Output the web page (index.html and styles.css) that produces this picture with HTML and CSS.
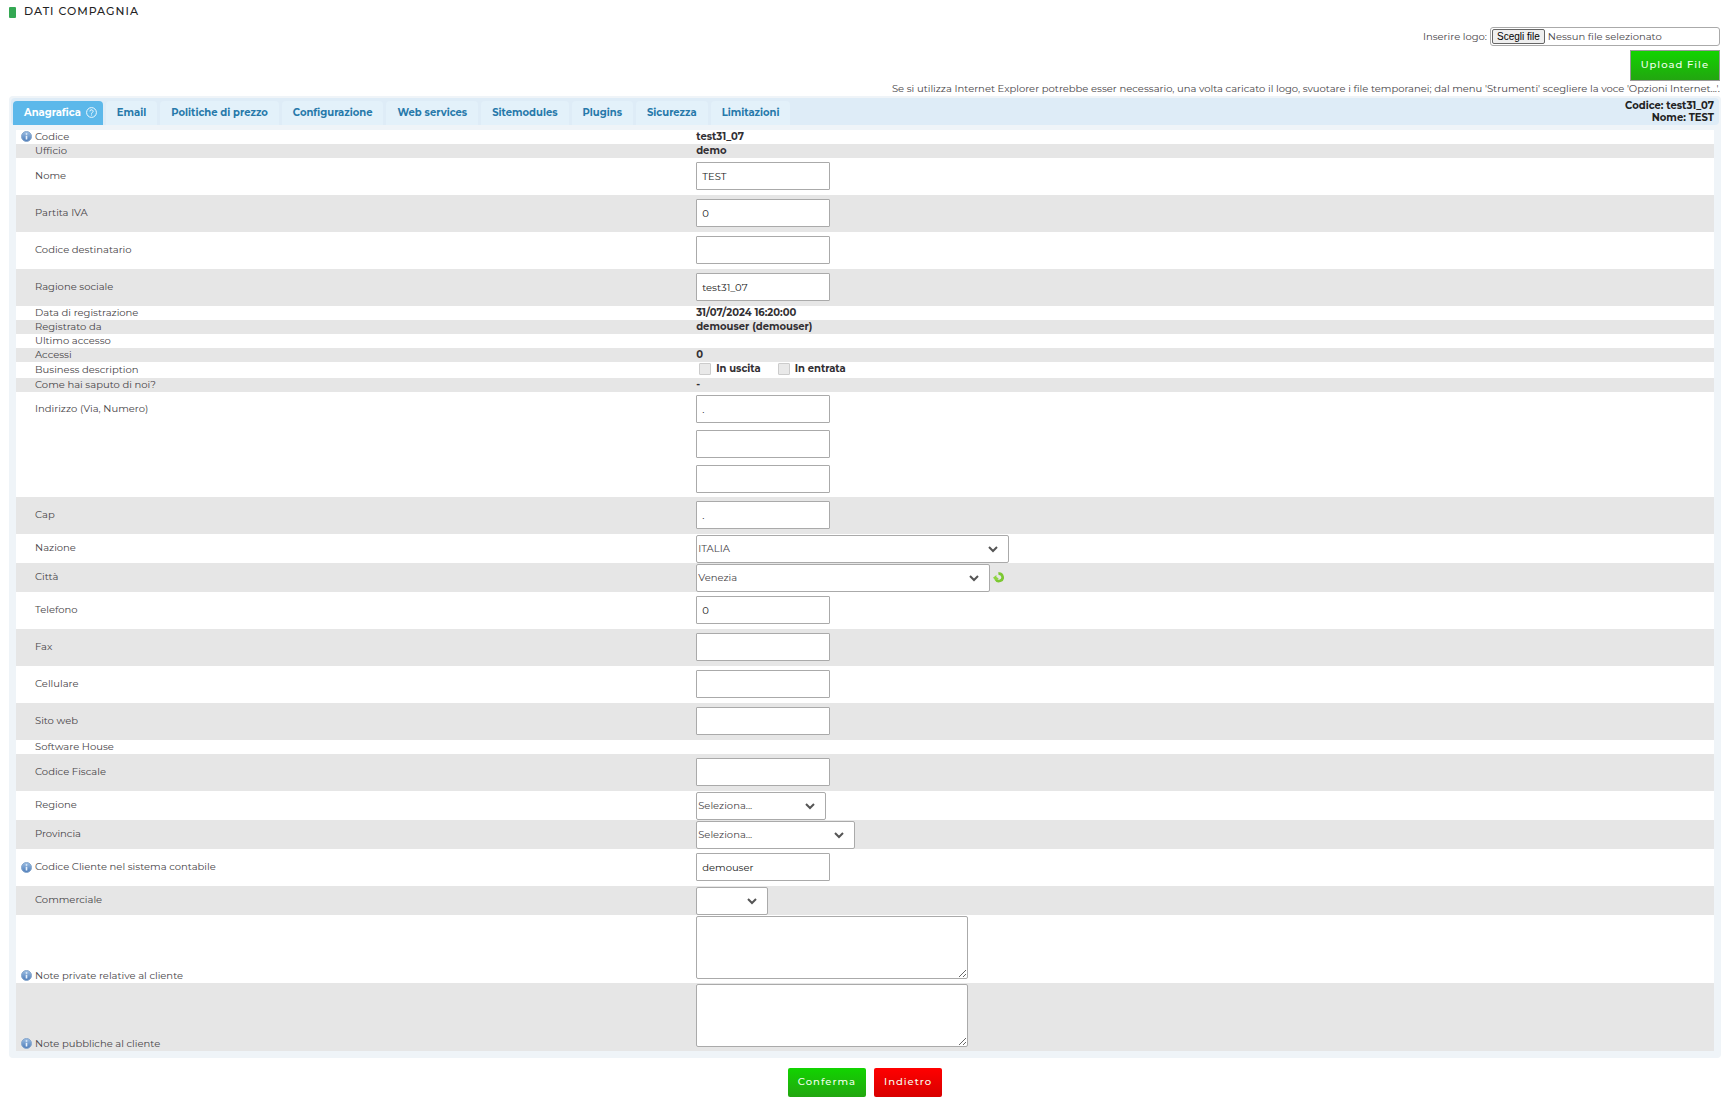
FILE: index.html
```html
<!DOCTYPE html>
<html lang="it">
<head>
  <meta charset="UTF-8">
  <meta name="viewport" content="width=device-width, initial-scale=1.0">
  <title>Dati compagnia</title>
  <link rel="stylesheet" href="styles.css">
</head>
<body>
  <h1 class="page-title">DATI COMPAGNIA</h1>

  <!-- Logo upload -->
  <form class="upload">
    <div class="upload-row">
      <label for="logo">Inserire logo:</label>
      <div class="file-box">
        <span class="file-btn">Scegli file</span>
        <span class="file-name">Nessun file selezionato</span>
        <input type="file" id="logo">
      </div>
    </div>
    <button type="button" class="btn btn-upload">Upload File</button>
    <p class="upload-note">Se si utilizza Internet Explorer potrebbe esser necessario, una volta caricato il logo, svuotare i file temporanei; dal menu 'Strumenti' scegliere la voce 'Opzioni Internet...'.</p>
  </form>

  <svg class="symbols" width="0" height="0" aria-hidden="true">
    <linearGradient id="info-fill" x1="0" y1="0" x2="0" y2="1">
      <stop offset="0" stop-color="#9dbfe4"/>
      <stop offset="1" stop-color="#4a7ab8"/>
    </linearGradient>
    <symbol id="info" viewBox="0 0 11 11">
      <circle cx="5.5" cy="5.5" r="5" fill="url(#info-fill)" stroke="#86a6cc"/>
      <path d="M5.5 2.2v1.6M5.5 4.8v3.7" stroke="#e8f1fb" stroke-width="1.6"/>
    </symbol>
  </svg>

  <form>
    <div class="panel">
      <!-- Tabs -->
      <div class="tabbar">
        <nav class="tabs">
          <a href="#" class="tab active">Anagrafica
            <svg class="help" viewBox="0 0 11 11" aria-hidden="true">
              <circle cx="5.5" cy="5.5" r="4.9" fill="none" stroke="#fff" stroke-width="0.9"/>
              <path d="M3.9 4.4a1.6 1.5 0 1 1 2.4 1.2c-.5.3-.8.5-.8 1.1M5.5 7.5v1" fill="none" stroke="#fff" stroke-width="0.9"/>
            </svg>
          </a>
          <a href="#" class="tab">Email</a>
          <a href="#" class="tab">Politiche di prezzo</a>
          <a href="#" class="tab">Configurazione</a>
          <a href="#" class="tab">Web services</a>
          <a href="#" class="tab">Sitemodules</a>
          <a href="#" class="tab">Plugins</a>
          <a href="#" class="tab">Sicurezza</a>
          <a href="#" class="tab">Limitazioni</a>
        </nav>
        <div class="company">
          <div>Codice: test31_07</div>
          <div>Nome: TEST</div>
        </div>
      </div>

      <!-- Anagrafica -->
      <table class="data">
        <colgroup>
          <col class="col-icon">
          <col>
          <col class="col-value">
        </colgroup>
        <tbody>
          <tr><td><svg class="info"><use href="#info"/></svg></td><th>Codice</th><td class="value">test31_07</td></tr>
          <tr><td></td><th>Ufficio</th><td class="value">demo</td></tr>
          <tr><td></td><th><label for="nome">Nome</label></th><td class="value"><input type="text" id="nome" value="TEST"></td></tr>
          <tr><td></td><th><label for="piva">Partita IVA</label></th><td class="value"><input type="text" id="piva" value="0"></td></tr>
          <tr><td></td><th><label for="coddest">Codice destinatario</label></th><td class="value"><input type="text" id="coddest"></td></tr>
          <tr><td></td><th><label for="ragione">Ragione sociale</label></th><td class="value"><input type="text" id="ragione" value="test31_07"></td></tr>
          <tr><td></td><th>Data di registrazione</th><td class="value">31/07/2024 16:20:00</td></tr>
          <tr><td></td><th>Registrato da</th><td class="value">demouser (demouser)</td></tr>
          <tr><td></td><th>Ultimo accesso</th><td class="value"></td></tr>
          <tr><td></td><th>Accessi</th><td class="value">0</td></tr>
          <tr>
            <td></td>
            <th>Business description</th>
            <td class="value">
              <div class="checks">
                <label><input type="checkbox" disabled>In uscita</label>
                <label><input type="checkbox" disabled>In entrata</label>
              </div>
            </td>
          </tr>
          <tr><td></td><th>Come hai saputo di noi?</th><td class="value">-</td></tr>
          <tr class="row-address">
            <td></td>
            <th><label for="indirizzo1">Indirizzo (Via, Numero)</label></th>
            <td class="value">
              <div class="address">
                <input type="text" id="indirizzo1" value=".">
                <input type="text" id="indirizzo2" aria-label="Indirizzo 2">
                <input type="text" id="indirizzo3" aria-label="Indirizzo 3">
              </div>
            </td>
          </tr>
          <tr><td></td><th><label for="cap">Cap</label></th><td class="value"><input type="text" id="cap" value="."></td></tr>
          <tr><td></td><th><label for="nazione">Nazione</label></th><td class="value"><select id="nazione" class="sel-nazione"><option>ITALIA</option></select></td></tr>
          <tr>
            <td></td>
            <th><label for="citta">Città</label></th>
            <td class="value">
              <div class="city">
                <select id="citta" class="sel-citta"><option>Venezia</option></select>
                <button type="button" class="refresh" aria-label="Aggiorna">
                  <svg viewBox="0 0 11 11" aria-hidden="true">
                    <path d="M5.4 1.7A3.7 3.7 0 1 1 2.6 7" fill="none" stroke="#7cc832" stroke-width="2.7"/>
                    <path d="M0 5.8L3.4 3v2l2.4 1.6-3 2z" fill="#8ed441"/>
                  </svg>
                </button>
              </div>
            </td>
          </tr>
          <tr><td></td><th><label for="telefono">Telefono</label></th><td class="value"><input type="text" id="telefono" value="0"></td></tr>
          <tr><td></td><th><label for="fax">Fax</label></th><td class="value"><input type="text" id="fax"></td></tr>
          <tr><td></td><th><label for="cellulare">Cellulare</label></th><td class="value"><input type="text" id="cellulare"></td></tr>
          <tr><td></td><th><label for="sito">Sito web</label></th><td class="value"><input type="text" id="sito"></td></tr>
          <tr><td></td><th>Software House</th><td class="value"></td></tr>
          <tr><td></td><th><label for="cf">Codice Fiscale</label></th><td class="value"><input type="text" id="cf"></td></tr>
          <tr><td></td><th><label for="regione">Regione</label></th><td class="value"><select id="regione" class="sel-regione"><option>Seleziona...</option></select></td></tr>
          <tr><td></td><th><label for="provincia">Provincia</label></th><td class="value"><select id="provincia" class="sel-provincia"><option>Seleziona...</option></select></td></tr>
          <tr><td><svg class="info"><use href="#info"/></svg></td><th><label for="contabile">Codice Cliente nel sistema contabile</label></th><td class="value"><input type="text" id="contabile" value="demouser"></td></tr>
          <tr><td></td><th><label for="commerciale">Commerciale</label></th><td class="value"><select id="commerciale" class="sel-commerciale"><option></option></select></td></tr>
          <tr class="row-notes"><td><svg class="info"><use href="#info"/></svg></td><th><label for="note1">Note private relative al cliente</label></th><td class="value"><textarea id="note1"></textarea></td></tr>
          <tr class="row-notes"><td><svg class="info"><use href="#info"/></svg></td><th><label for="note2">Note pubbliche al cliente</label></th><td class="value"><textarea id="note2"></textarea></td></tr>
        </tbody>
      </table>
    </div>

    <div class="actions">
      <button type="button" class="btn">Conferma</button>
      <button type="button" class="btn btn-red">Indietro</button>
    </div>
  </form>
</body>
</html>
```
FILE: styles.css
```css
* {
  box-sizing: border-box;
}
body {
  margin: 0;
  padding: 0 10px 0 9px;
  background: #fff;
  color: #484548;
  font-family: Montserrat, Inter, sans-serif;
  font-size: 10px;
  line-height: 14px;
}
.page-title {
  display: flex;
  align-items: center;
  gap: 8px;
  margin: 0;
  padding-top: 4px;
  color: #222;
  font-size: 11px;
  font-weight: 500;
  letter-spacing: 1px;
}
.page-title::before {
  content: "";
  width: 7px;
  height: 11px;
  margin-top: 2px;
  border-radius: 1px;
  background: #34a853;
}
.symbols {
  position: absolute;
}

/* Logo upload */
.upload {
  display: flex;
  flex-direction: column;
  align-items: flex-end;
  padding: 9px 1px 0 0;
}
.upload-row {
  display: flex;
  align-items: center;
  gap: 3px;
}
.file-box {
  position: relative;
  display: flex;
  align-items: center;
  gap: 3px;
  width: 230px;
  height: 19px;
  padding: 0 1px;
  border: 1px solid #aaa;
  border-radius: 3px;
}
.file-box input {
  position: absolute;
  inset: 0;
  width: 100%;
  opacity: 0;
}
.file-btn {
  padding: 0 4px;
  border: 1px solid #666;
  border-radius: 2px;
  background: #efefef;
  color: #000;
  font-family: "Liberation Sans", Arial, sans-serif;
  line-height: 13px;
}
.upload-note {
  margin: 0;
}
.btn {
  height: 29px;
  padding: 0 10px 2px;
  border: none;
  border-radius: 2px;
  background: linear-gradient(#12d400, #22a610);
  color: #f4fff0;
  font-family: inherit;
  font-size: 10px;
  font-weight: 500;
  letter-spacing: 1px;
  cursor: pointer;
}
.btn-upload {
  height: 31px;
  margin: 4px 0 1px;
  border: 1px solid #999;
  border-radius: 0;
}
.btn-red {
  background: linear-gradient(#ff0000, #d80000);
}

/* Panel and tabs */
.panel {
  padding: 2px 2px 7px;
  border-radius: 4px;
  background: #eff4f8;
}
.tabbar {
  display: flex;
  justify-content: space-between;
  height: 27px;
  padding: 3px 5px 0 2px;
  border-radius: 4px;
  background: #deecf7;
}
.tabs {
  display: flex;
  gap: 3px;
}
.tab {
  display: flex;
  align-items: center;
  gap: 5px;
  padding: 0 11px 1px;
  border-radius: 4px 4px 0 0;
  background: #e3f1fa;
  color: #2779aa;
  font-weight: 700;
  text-decoration: none;
}
.tab.active {
  padding-right: 6px;
  background: #5cb8ea;
  color: #fff;
}
.help {
  width: 11px;
  height: 11px;
}
.company {
  color: #222;
  font-weight: 700;
  line-height: 12px;
  text-align: right;
  margin-top: -1px;
}

/* Data table */
.data {
  width: calc(100% - 10px);
  margin: 5px 5px 0;
  border-collapse: collapse;
  table-layout: fixed;
  background: #fff;
}
.data tr:nth-child(even) {
  background: #e6e6e6;
}
.data td,
.data th {
  height: 14px;
  padding: 0;
  font-weight: 400;
  text-align: left;
  vertical-align: middle;
}
.data th label {
  display: block;
  padding-bottom: 2px;
}
.data .value {
  padding-left: 1px;
  color: #322f33;
  font-weight: 700;
}
.col-icon {
  width: 19px;
}
.col-value {
  width: 60%;
}
.info {
  display: block;
  width: 11px;
  height: 11px;
  margin: 1px 0 2px 5px;
}
.data input[type="text"],
.data select,
.data textarea {
  display: block;
  border: 1px solid #aaa;
  border-radius: 2px;
  background-color: #fff;
  color: #484548;
  font-family: inherit;
  font-size: 10px;
}
.data input[type="text"] {
  width: 134px;
  height: 28px;
  margin: 4px 0 5px;
  padding: 1px 5px 0;
  border-radius: 1px;
  color: #222;
}
.data select {
  height: 28px;
  margin-top: 1px;
  padding: 0 24px 2px 1px;
  appearance: none;
  background-image: url("data:image/svg+xml,%3Csvg xmlns='http://www.w3.org/2000/svg' width='10' height='7'%3E%3Cpath d='M1 1l4 4 4-4' fill='none' stroke='%23555' stroke-width='2'/%3E%3C/svg%3E");
  background-repeat: no-repeat;
  background-position: right 10px center;
}
.data .sel-nazione {
  width: 313px;
}
.data .sel-citta {
  width: 294px;
}
.data .sel-regione {
  width: 130px;
}
.data .sel-provincia {
  width: 159px;
}
.data .sel-commerciale {
  width: 72px;
}
.data textarea {
  width: 272px;
  height: 63px;
  margin: 1px 0 4px;
}
.checks {
  display: flex;
  gap: 17px;
  padding: 0 0 2px 3px;
}
.checks label {
  display: flex;
  align-items: center;
  gap: 5px;
}
.checks input {
  width: 12px;
  height: 12px;
  margin: 0;
  appearance: none;
  border: 1px solid #ccc;
  border-radius: 1px;
  background: #e9e9e9;
}
.address {
  display: flex;
  flex-direction: column;
  gap: 7px;
  padding: 3px 0 4px;
}
.data .address input {
  margin: 0;
}
.data .row-address th {
  padding-top: 10px;
  vertical-align: top;
}
.data .row-notes td,
.data .row-notes th {
  vertical-align: bottom;
}
.row-notes th label {
  padding-bottom: 0;
}
.city {
  display: flex;
  align-items: center;
  gap: 3px;
}
.refresh {
  padding: 0;
  border: none;
  background: none;
  cursor: pointer;
}
.refresh svg {
  display: block;
  width: 11px;
  height: 11px;
}

.actions {
  display: flex;
  justify-content: center;
  gap: 8px;
  margin-top: 10px;
}
```
